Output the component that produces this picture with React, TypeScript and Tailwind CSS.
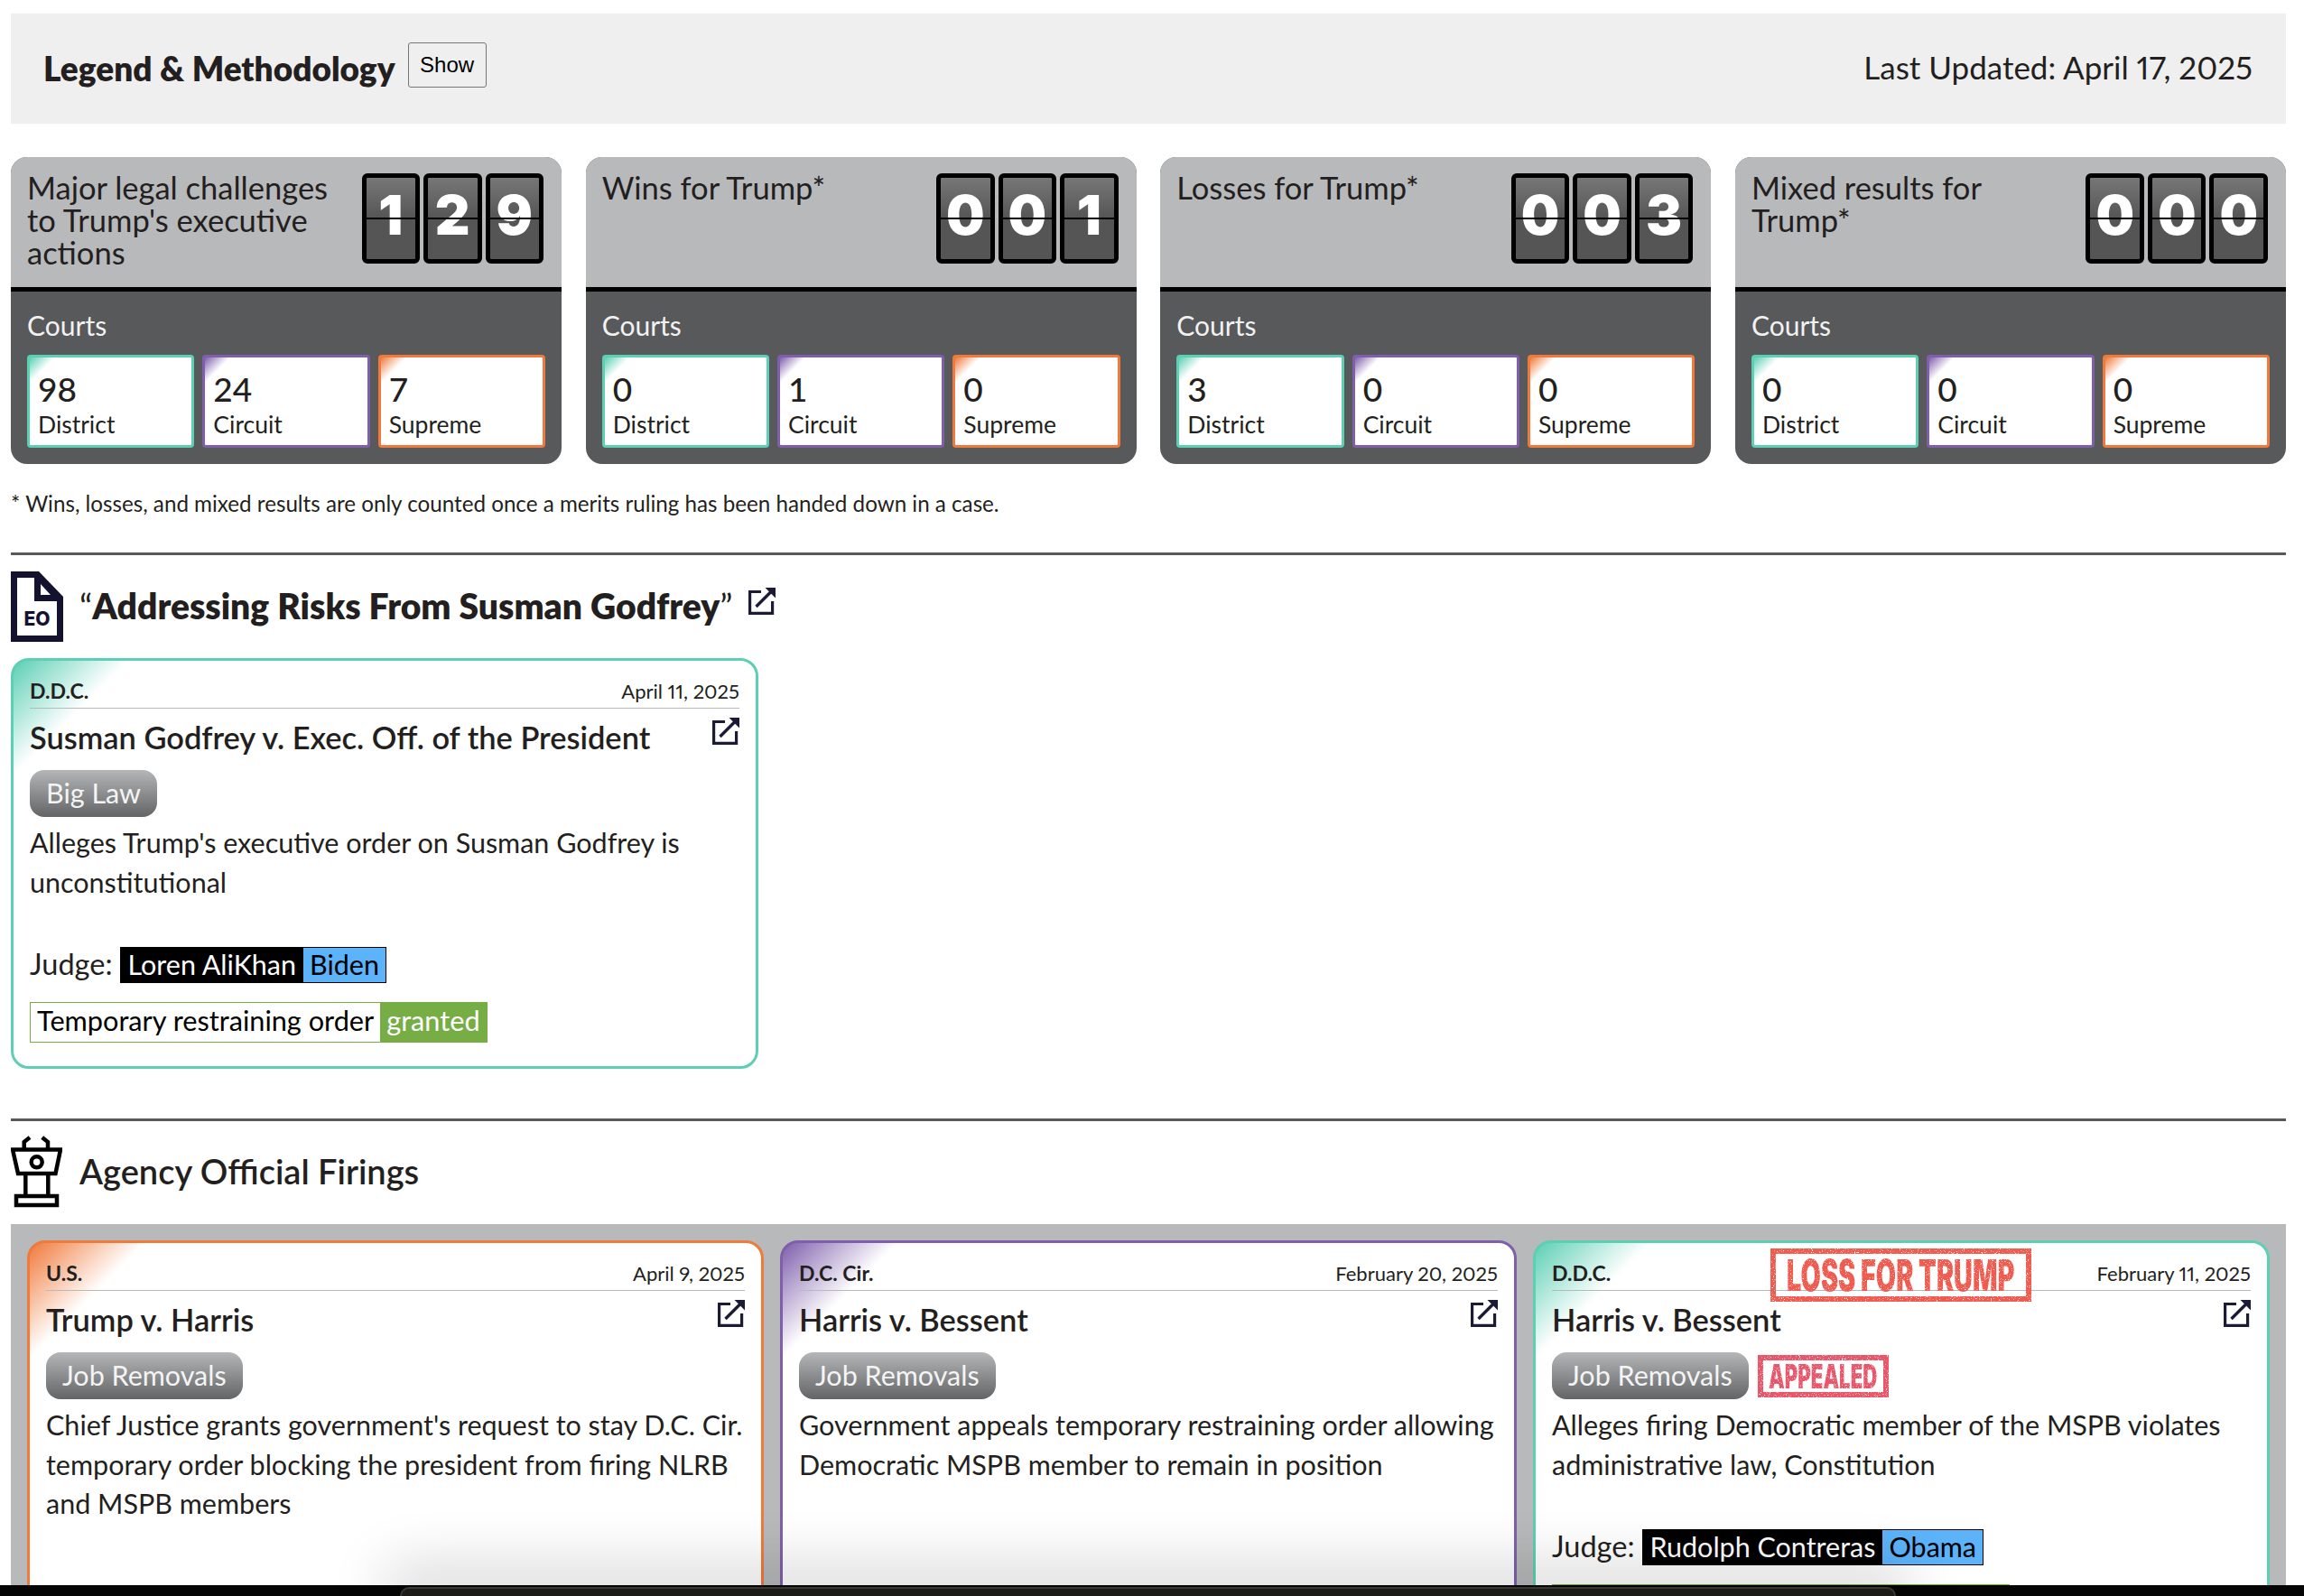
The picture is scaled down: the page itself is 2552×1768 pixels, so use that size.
import type { ReactNode } from "react";

type Court = "district" | "circuit" | "supreme";

const courtStyles: Record<Court, { box: string; card: string }> = {
  district: {
    box: "border-[#5ccfb4] bg-[linear-gradient(135deg,#5ccfb4_0px,#ffffff_20px)]",
    card: "border-[#5ccfb4] bg-[linear-gradient(135deg,#5ccfb4_0px,#ffffff_90px)]",
  },
  circuit: {
    box: "border-[#7f5fac] bg-[linear-gradient(135deg,#7f5fac_0px,#ffffff_20px)]",
    card: "border-[#7f5fac] bg-[linear-gradient(135deg,#7f5fac_0px,#ffffff_90px)]",
  },
  supreme: {
    box: "border-[#f07a3c] bg-[linear-gradient(135deg,#f07a3c_0px,#ffffff_20px)]",
    card: "border-[#f07a3c] bg-[linear-gradient(135deg,#f07a3c_0px,#ffffff_90px)]",
  },
};

const stats = [
  { title: "Major legal challenges to Trump's executive actions", total: "129", courts: ["98", "24", "7"] },
  { title: "Wins for Trump*", total: "001", courts: ["0", "1", "0"] },
  { title: "Losses for Trump*", total: "003", courts: ["3", "0", "0"] },
  { title: "Mixed results for Trump*", total: "000", courts: ["0", "0", "0"] },
];

const courtNames: { key: Court; label: string }[] = [
  { key: "district", label: "District" },
  { key: "circuit", label: "Circuit" },
  { key: "supreme", label: "Supreme" },
];

function ExternalIcon() {
  return (
    <svg viewBox="0 0 30 30" className="h-[30px] w-[30px]" fill="none" stroke="#1b1b38">
      <path d="M14 4.5H1.6V28.4H26.6V15" strokeWidth="3.2" />
      <path d="M8.5 21L25 4.5" strokeWidth="3.4" />
      <path d="M18.5 0H30V11.5Z" fill="#1b1b38" stroke="none" />
    </svg>
  );
}

function Stat({ title, total, courts }: { title: string; total: string; courts: string[] }) {
  return (
    <div className="flex w-[610px] flex-col overflow-hidden rounded-[18px] bg-[#58595b]">
      <div className="flex h-[149px] items-start justify-between border-b-[5px] border-black bg-[#b8b9bb] pl-[18px] pr-[20px]">
        <div className="mt-[16px] w-[360px] text-[34.5px] leading-[36px] text-[#231f20]">{title}</div>
        <div className="mt-[18px] flex gap-[4px]">
          {total.split("").map((digit, i) => (
            <div
              key={i}
              className="relative flex h-[100px] w-[64.5px] items-center justify-center rounded-[6px] border-[5px] border-black bg-[linear-gradient(180deg,#777777_0%,#555555_50%,#555555_100%)] pb-[8px] font-['Inter',sans-serif] text-[60px] font-black leading-none text-white"
            >
              {digit}
              <div className="absolute inset-x-0 top-[44px] h-[2px] bg-black" />
            </div>
          ))}
        </div>
      </div>
      <div className="flex flex-col gap-[14px] px-[18px] pb-[18px] pt-[20px]">
        <div className="pb-[2px] text-[30px] leading-[34px] text-[#f2f2f2]">Courts</div>
        <div className="flex gap-[9px]">
          {courtNames.map((c, i) => (
            <div key={c.key} className={`flex h-[103px] flex-1 flex-col rounded-[4px] border-[3px] pl-[9px] pt-[13px] ${courtStyles[c.key].box}`}>
              <div className="text-[37px] font-medium leading-[44px] text-[#231f20]">{courts[i]}</div>
              <div className="mt-[1px] text-[26.5px] leading-[32px] text-[#231f20]">{c.label}</div>
            </div>
          ))}
        </div>
      </div>
    </div>
  );
}

function Judge({ name, president }: { name: string; president: string }) {
  return (
    <div className="flex h-[40px] items-center gap-[8px] text-[32.5px] text-[#231f20]">
      <span className="pb-[2px]">Judge:</span>
      <span className="flex h-[40px] items-center border border-black bg-black text-[30.5px] leading-none">
        <span className="px-[8px] pb-[2px] text-white">{name}</span>
        <span className="flex h-full items-center bg-[#5cb3fa] px-[7px] pb-[2px] text-black">{president}</span>
      </span>
    </div>
  );
}

function Order() {
  return (
    <div className="mt-[21px] flex h-[45px] w-fit items-stretch border border-[#76ad45] text-[30.7px] leading-none">
      <span className="flex items-center bg-white px-[7px] pb-[3px] text-black">Temporary restraining order</span>
      <span className="flex items-center bg-[#76ad45] px-[7px] pb-[3px] text-white">granted</span>
    </div>
  );
}

function CaseCard({
  court,
  courtLabel,
  date,
  title,
  tag,
  description,
  stamp,
  children,
}: {
  court: Court;
  courtLabel: string;
  date: string;
  title: string;
  tag: string;
  description: string;
  stamp?: ReactNode;
  children?: ReactNode;
}) {
  return (
    <div className={`h-[455px] w-full rounded-[20px] border-[3px] px-[18px] pt-[19px] ${courtStyles[court].card}`}>
      <div className="flex h-[34px] items-center justify-between border-b border-[#b8b9bb] pb-[4px] text-[#231f20]">
        <span className="text-[23px] font-bold">{courtLabel}</span>
        <span className="text-[22px] proportional-nums">{date}</span>
      </div>
      <div className="flex h-[68px] items-start justify-between">
        <div className="pt-[10px] text-[34.4px] font-semibold leading-[44px] text-[#231f20]">{title}</div>
        <div className="pt-[10px]">
          <ExternalIcon />
        </div>
      </div>
      <div className="flex h-[52px] items-center gap-[10px]">
        <span className="flex h-[52px] items-center rounded-[16px] bg-[linear-gradient(180deg,#b5b6b8_0%,#636466_100%)] px-[18px] pb-[2px] text-[30.5px] leading-none text-[#f4f4f4]">
          {tag}
        </span>
        {stamp}
      </div>
      <p className="mt-[7px] h-[137px] text-[30.5px] leading-[43.5px] text-[#231f20]">{description}</p>
      {children}
    </div>
  );
}

function Stamp({ text, className }: { text: string; className: string }) {
  return (
    <span className={`flex items-center justify-center overflow-hidden border-[6px] font-['Inter',sans-serif] font-black leading-none [filter:url(#distress)] ${className}`}>
      <span className="inline-block scale-x-[0.6] whitespace-nowrap">{text}</span>
    </span>
  );
}

export default function App() {
  return (
    <div className="relative h-[1768px] w-full overflow-hidden bg-white font-['Lato','Noto_Sans',sans-serif]">
      <svg className="absolute h-0 w-0">
        <filter id="distress">
          <feTurbulence type="fractalNoise" baseFrequency="0.9" numOctaves="2" seed="4" result="noise" />
          <feColorMatrix in="noise" type="matrix" values="0 0 0 0 0  0 0 0 0 0  0 0 0 0 0  0 0 0 -5 4" result="mask" />
          <feComposite in="SourceGraphic" in2="mask" operator="in" />
        </filter>
      </svg>

      <div className="pl-[12px] pr-[20px] pt-[15px]">
        <header className="flex h-[122px] items-center justify-between bg-[#efefef] pl-[36px] pr-[37px]">
          <div className="flex items-center gap-[14px]">
            <h2 className="pb-[2px] text-[37px] font-extrabold leading-none text-[#231f20]">Legend &amp; Methodology</h2>
            <button className="mb-[8px] h-[50px] w-[87px] rounded-[3px] border border-[#767676] bg-[#efefef] font-['Liberation_Sans',sans-serif] text-[24px] text-black">
              Show
            </button>
          </div>
          <div className="pb-[4px] text-[35px] text-[#231f20] proportional-nums">Last Updated: April 17, 2025</div>
        </header>

        <div className="mt-[37px] flex justify-between">
          {stats.map((s) => (
            <Stat key={s.title} {...s} />
          ))}
        </div>

        <p className="mt-[30px] text-[24.2px] leading-[28px] text-[#231f20]">
          * Wins, losses, and mixed results are only counted once a merits ruling has been handed down in a case.
        </p>

        <div className="mt-[40px] h-[3px] bg-[#58595b]" />

        <div className="mt-[18px] flex h-[78px] items-center gap-[18px]">
          <svg viewBox="0 0 58 78" className="h-[78px] w-[58px] shrink-0">
            <path d="M0 0H31L58 28V78H0Z" fill="#13132f" />
            <path d="M7 7H26V33H51V71H7Z" fill="#fff" />
            <path d="M33 14L44 26H33Z" fill="#fff" />
            <text x="29" y="60" textAnchor="middle" fontFamily="Inter, sans-serif" fontWeight="800" fontSize="21" fill="#13132f">
              EO
            </text>
          </svg>
          <div className="flex items-start gap-[18px]">
            <h3 className="-mt-[2px] text-[39px] leading-[44px] text-[#231f20]">
              “<b className="font-extrabold">Addressing Risks From Susman Godfrey</b>”
            </h3>
            <ExternalIcon />
          </div>
        </div>

        <div className="mt-[18px] w-[828px]">
          <CaseCard
            court="district"
            courtLabel="D.D.C."
            date="April 11, 2025"
            title="Susman Godfrey v. Exec. Off. of the President"
            tag="Big Law"
            description="Alleges Trump's executive order on Susman Godfrey is unconstitutional"
          >
            <Judge name="Loren AliKhan" president="Biden" />
            <Order />
          </CaseCard>
        </div>

        <div className="mt-[55px] h-[3px] bg-[#58595b]" />

        <div className="mt-[16px] flex h-[80px] items-center gap-[19px]">
          <svg viewBox="0 0 57 80" className="h-[80px] w-[57px] shrink-0" fill="none" stroke="#000" strokeWidth="4.5">
            <path d="M2 15.5H55L49.5 42H8Z" />
            <circle cx="28.7" cy="29.3" r="6" />
            <path d="M16.3 42V67M41.3 42V67" />
            <path d="M14.7 15V7L21 2M41 15V7L34.7 2" />
            <rect x="6" y="67" width="45" height="10" />
          </svg>
          <h3 className="pb-[3px] text-[38px] font-semibold leading-none text-[#231f20]">Agency Official Firings</h3>
        </div>

        <div className="mt-[18px] flex h-[420px] justify-between bg-[#b8b9bb] px-[18px] pt-[18px]">
          <div className="w-[816px]">
            <CaseCard
              court="supreme"
              courtLabel="U.S."
              date="April 9, 2025"
              title="Trump v. Harris"
              tag="Job Removals"
              description="Chief Justice grants government's request to stay D.C. Cir. temporary order blocking the president from firing NLRB and MSPB members"
            />
          </div>
          <div className="w-[816px]">
            <CaseCard
              court="circuit"
              courtLabel="D.C. Cir."
              date="February 20, 2025"
              title="Harris v. Bessent"
              tag="Job Removals"
              description="Government appeals temporary restraining order allowing Democratic MSPB member to remain in position"
            />
          </div>
          <div className="relative w-[816px]">
            <CaseCard
              court="district"
              courtLabel="D.D.C."
              date="February 11, 2025"
              title="Harris v. Bessent"
              tag="Job Removals"
              description="Alleges firing Democratic member of the MSPB violates administrative law, Constitution"
              stamp={<Stamp text="APPEALED" className="h-[47px] w-[145px] border-[#e9566a] text-[37px] text-[#e9566a]" />}
            >
              <Judge name="Rudolph Contreras" president="Obama" />
              <Order />
            </CaseCard>
            <div className="absolute left-[263px] top-[9px]">
              <Stamp text="LOSS FOR TRUMP" className="h-[59px] w-[289px] border-[#ef5b4f] text-[48px] text-[#ef5b4f]" />
            </div>
          </div>
        </div>
      </div>

      {/* dock peeking in along the bottom edge */}
      <div className="absolute inset-x-0 bottom-0 h-[12px] bg-[#050505]">
        <div className="absolute bottom-0 left-[443px] right-[452px] h-[10px] rounded-t-[18px] border-x-2 border-t-2 border-[#3a3833] bg-[#1d1b18] shadow-[0_-8px_60px_20px_rgba(0,0,0,0.15)]" />
      </div>
    </div>
  );
}
